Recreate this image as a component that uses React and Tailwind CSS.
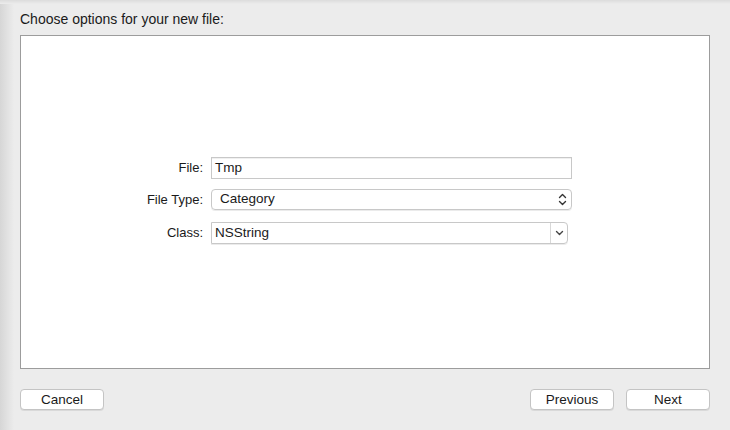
import React from 'react';

const font = { fontFamily: '"Liberation Sans", Arial, sans-serif' };

const Label = ({ children }) => (
  <div className="w-[190px] pr-[8px] text-right text-[13px] text-[#1a1a1a]">{children}</div>
);

const Button = ({ children, className = '' }) => (
  <button
    className={`h-[21px] rounded-[4px] border border-[#c4c4c4] bg-white text-[13.5px] text-[#1a1a1a] shadow-[0_1px_0_rgba(0,0,0,0.08)] ${className}`}
  >
    {children}
  </button>
);

export default function App() {
  return (
    <div
      className="relative h-[430px] w-[730px] overflow-hidden bg-[#ececec]"
      style={font}
    >
      <div className="pointer-events-none absolute inset-y-0 left-0 w-[14px] bg-gradient-to-r from-[#d6d6d6] to-[#ececec]" />
      <div className="pointer-events-none absolute inset-x-0 top-0 h-[4px] bg-gradient-to-b from-[#dcdcdc] to-[#ececec]" />

      <div className="relative flex h-full flex-col px-[20px]">
        <div className="pt-[11px] text-[14px] leading-[16px] text-[#1a1a1a]">
          Choose options for your new file:
        </div>

        <div className="mt-[8px] flex h-[334px] w-[690px] flex-col border border-[#9c9c9c] bg-white pt-[121px]">
          <div className="flex items-center">
            <Label>File:</Label>
            <div className="flex h-[22px] w-[361px] items-center border border-[#c8c8c8] pl-[3px] text-[13.5px] text-[#1a1a1a] shadow-[inset_0_1px_0_rgba(0,0,0,0.06)]">
              Tmp
            </div>
          </div>

          <div className="mt-[10px] flex items-center">
            <Label>File Type:</Label>
            <div className="flex h-[21px] w-[361px] items-center justify-between rounded-[4px] border border-[#c8c8c8] pl-[8px] pr-[4px] text-[13.5px] text-[#1a1a1a] shadow-[0_1px_0_rgba(0,0,0,0.08)]">
              <span>Category</span>
              <svg width="9" height="13" viewBox="0 0 9 13" fill="none" stroke="#333" strokeWidth="1.4" strokeLinecap="round" strokeLinejoin="round">
                <path d="M1.5 4.5 L4.5 1.5 L7.5 4.5" />
                <path d="M1.5 8.5 L4.5 11.5 L7.5 8.5" />
              </svg>
            </div>
          </div>

          <div className="mt-[12px] flex items-center">
            <Label>Class:</Label>
            <div className="flex h-[22px] w-[357px] items-stretch rounded-r-[4px] border border-[#c8c8c8] text-[13.5px] text-[#1a1a1a] shadow-[0_1px_0_rgba(0,0,0,0.08)]">
              <div className="flex flex-1 items-center pl-[3px]">NSString</div>
              <div className="flex w-[17px] items-center justify-center border-l border-[#d8d8d8]">
                <svg width="9" height="6" viewBox="0 0 9 6" fill="none" stroke="#444" strokeWidth="1.4" strokeLinecap="round" strokeLinejoin="round">
                  <path d="M1.5 1.5 L4.5 4.5 L7.5 1.5" />
                </svg>
              </div>
            </div>
          </div>
        </div>

        <div className="mt-[20px] flex items-center">
          <Button className="w-[84px]">Cancel</Button>
          <div className="flex-1" />
          <Button className="w-[84px]">Previous</Button>
          <Button className="ml-[12px] w-[84px]">Next</Button>
        </div>
      </div>
    </div>
  );
}
